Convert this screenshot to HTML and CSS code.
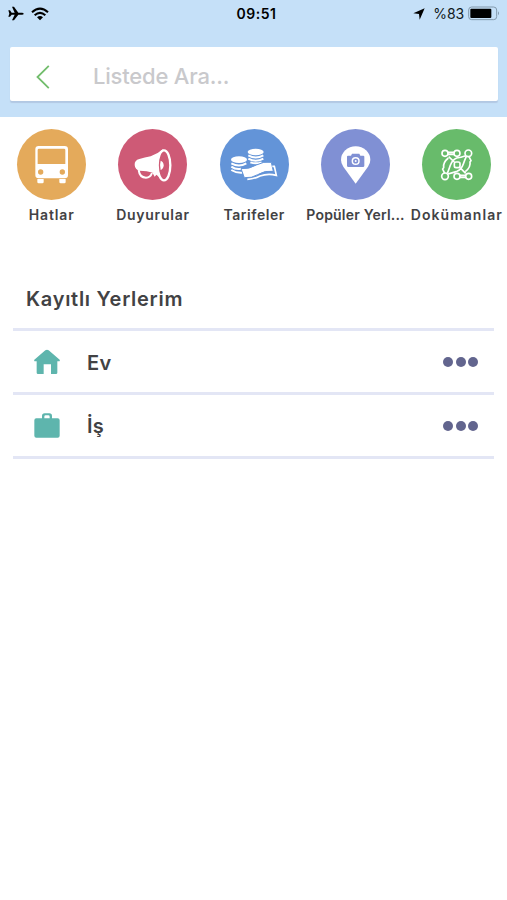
FILE: index.html
```html
<!DOCTYPE html>
<html lang="tr">
<head>
<meta charset="utf-8">
<title>Kayıtlı Yerlerim</title>
<link rel="stylesheet" href="styles.css">
</head>
<body>
<header class="top">
  <div class="status">
    <div class="status-left">
      <svg width="16" height="15" viewBox="0 0 48 45"><path d="M1 13h5l5 7h9L12 2h6l13 18h11q5 0 5 3t-5 3H31L18 43h-6l8-17h-9l-5 6H1l3-9z"/></svg>
      <svg class="wifi" width="18" height="14" viewBox="0 0 54 42"><g fill="none" stroke="#000" stroke-width="6"><path d="M3 16q24-22 48 0"/><path d="M11 25q16-15 32 0"/></g><path d="M18 31q9-8 18 0l-9 9z"/></svg>
    </div>
    <span class="clock">09:51</span>
    <div class="status-right">
      <svg width="12" height="12" viewBox="0 0 36 36"><path d="M35 1L20 35l-2-17L1 16z"/></svg>
      <span class="percent">%83</span>
      <svg class="battery" width="32" height="15" viewBox="0 0 96 45"><rect x="2" y="3" width="84" height="38" rx="9" fill="none" stroke="#8399ac" stroke-width="3"/><rect x="7" y="8" width="63" height="28" rx="3"/><path d="M90 16q6 6 0 12z" fill="#8399ac"/></svg>
    </div>
  </div>
  <div class="search">
    <svg class="back" width="14" height="24" viewBox="0 0 14 24"><path d="M12.8 .8L1.5 12 12.8 23.2" fill="none" stroke="#72bd6c" stroke-width="1.8"/></svg>
    <span class="placeholder">Listede Ara...</span>
  </div>
</header>
<nav class="menu">
  <div class="item">
    <svg class="disc orange" viewBox="51 26 207 213"><path fill="#fff" fill-rule="evenodd" d="M116 77h78q10 0 10 10v77q0 10-10 10h-78q-10 0-10-10V87q0-10 10-10zm1 8q-4 0-4 4v42h83V89q0-4-4-4zm5 62a8 8 0 100 16 8 8 0 000-16zm65 0a8 8 0 100 16 8 8 0 000-16z"/><path fill="#fff" d="M112 176h19v9q0 4-4 4h-11q-4 0-4-4zm66 0h19v9q0 4-4 4h-11q-4 0-4-4z"/></svg>
    <span class="label hatlar">Hatlar</span>
  </div>
  <div class="item">
    <svg class="disc red" viewBox="54 26 207 213"><path fill="#fff" d="M190 86q-18 15-38 22-18 4-34 8-15 4-14 18 1 14 15 17 22 0 40 6 14 6 31 26z"/><path d="M116 149q3 23 22 23 13 0 18-14" fill="none" stroke="#fff" stroke-width="6"/><path d="M156 155l8 14 7-8" fill="#fff"/><ellipse cx="192" cy="135" rx="19" ry="45" fill="#ce5a76" stroke="#fff" stroke-width="7"/><path d="M182 121q9 4 9 14t-9 14q-4-14 0-28z" fill="#fff"/></svg>
    <span class="label duyurular">Duyurular</span>
  </div>
  <div class="item">
    <svg class="disc blue" viewBox="53 26 207 213"><g fill="#fff"><ellipse cx="160" cy="95" rx="24" ry="10"/><ellipse cx="110" cy="118" rx="24" ry="10"/></g><g fill="none" stroke="#fff" stroke-width="6"><path d="M138 105q22 13 45 0M138 115q22 13 45 0M144 126q16 6 34 0M87 129q23 13 45 0M87 139q14 10 30 6M87 149q14 9 32 8"/></g><path fill="#fff" stroke="#6394d8" stroke-width="3" d="M116 145q24 2 46-11 22-12 45-8l6 27q-25-4-47 10-18 11-40 9z"/><path d="M135 177q20-1 38-10 24-9 49-2l-6-27h-6" fill="none" stroke="#fff" stroke-width="5"/></svg>
    <span class="label tarifeler">Tarifeler</span>
  </div>
  <div class="item">
    <svg class="disc violet" viewBox="56 26 207 213"><path fill="#fff" d="M160 190l-37-51q-7-10-7-20a44 41 0 0188 0q0 10-7 20z"/><path fill="#8090d4" d="M137 106h9l3-6h22l3 6h9q3 0 3 3v27q0 4-4 4h-44q-4 0-4-4v-27q0-3 3-3z"/><circle cx="160" cy="122" r="10" fill="#8090d4" stroke="#fff" stroke-width="4.5"/><circle cx="160" cy="122" r="3" fill="#fff"/></svg>
    <span class="label populer">Popüler Yerl...</span>
  </div>
  <div class="item">
    <svg class="disc green" viewBox="60 26 207 213"><g fill="none" stroke="#fff" stroke-width="5"><circle cx="129" cy="99" r="9"/><circle cx="165" cy="99" r="9"/><circle cx="199" cy="99" r="10"/><circle cx="129" cy="168" r="10"/><circle cx="165" cy="168" r="9"/><circle cx="200" cy="168" r="9"/><rect x="157" y="125" width="17" height="17" rx="5"/><path d="M137 96h20M137 102h20M173 165h19M173 171h19M191 106q-15 5-27 7-13 5-19 22-4 12-9 24M138 161q15-5 27-8 13-5 19-22 4-12 9-23M140 109l17 16M174 142l17 17M139 113q-17 14-14 29l-3 4 6 13M190 154q17-14 14-29l3-4-6-12"/></g></svg>
    <span class="label dokumanlar">Dokümanlar</span>
  </div>
</nav>
<main class="places">
  <h1 class="heading">Kayıtlı Yerlerim</h1>
  <div class="place">
    <svg class="place-icon" width="26" height="26" viewBox="0 0 78 78"><path fill="#5eb5ad" d="M34 4q5-4 10 0l33 28q2 5-3 5h-4v34q0 4-4 4H51V46H29v29H12q-4 0-4-4V37H4q-5 0-3-5z"/></svg>
    <span class="place-name ev">Ev</span>
    <span class="dots"><i></i><i></i><i></i></span>
  </div>
  <div class="place">
    <svg class="place-icon" width="26" height="26" viewBox="0 0 78 78"><path fill="#5eb5ad" fill-rule="evenodd" d="M7 16h17V9q0-8 8-8h14q8 0 8 8v7h17q6 0 6 6v46q0 6-6 6H7q-6 0-6-6V22q0-6 6-6zm24 0h16v-5q0-4-4-4h-8q-4 0-4 4z"/></svg>
    <span class="place-name is">İş</span>
    <span class="dots"><i></i><i></i><i></i></span>
  </div>
</main>
</body>
</html>
```
FILE: styles.css
```css
* { box-sizing: border-box; }
body { margin: 0; width: 507px; height: 900px; overflow: hidden; background: #fff; color: #424244; font-family: Inter, sans-serif; }
svg { display: block; flex: none; }
.top { height: 117px; background: #c5e0f8; }
.status { display: grid; grid-template-columns: 1fr auto 1fr; align-items: center; height: 27px; padding: 0 7px 0 8px; color: #101820; }
.status-left, .status-right { display: flex; align-items: center; }
.status-right { justify-content: flex-end; }
.wifi { margin-left: 7px; }
.clock { margin-left: 5px; color: #000; font-size: 14px; font-weight: 600; letter-spacing: .5px; }
.percent { margin: 0 4px 0 9px; font-size: 14px; letter-spacing: -.1px; }
.status-right svg:first-child { margin-right: -1px; }
.search { display: flex; align-items: center; height: 54px; margin: 20px 9px 0 10px; padding-left: 26px; background: #fff; border-radius: 2px; box-shadow: 0 2px 1px #b2c8e3; }
.back { margin-top: 5px; }
.placeholder { margin: 4px 0 0 43px; color: #c9c9cc; font-size: 22px; font-weight: 500; line-height: 30px; letter-spacing: -.2px; }
.menu { display: grid; grid-template-columns: repeat(5, 101.3px); padding-top: 12px; margin-left: 1px; height: 158px; }
.item { display: flex; flex-direction: column; align-items: center; }
.disc { width: 69px; height: 71px; border-radius: 50%; }
.orange { background: #e4aa5b; }
.red { background: #ce5a76; }
.blue { background: #6394d8; }
.violet { background: #8090d4; }
.green { background: #68bb6b; }
.label { margin-top: 5px; font-size: 14px; font-weight: 600; line-height: 20px; white-space: nowrap; }
.hatlar { letter-spacing: .85px; }
.duyurular { letter-spacing: .75px; }
.tarifeler { letter-spacing: .55px; }
.populer { letter-spacing: .2px; }
.dokumanlar { letter-spacing: 1.05px; }
.places { margin: 0 13px; }
.heading { margin: 0; height: 56px; padding: 10px 0 0 13px; font-size: 20px; font-weight: 600; line-height: 28px; letter-spacing: .72px; border-bottom: 3px solid #e3e6f5; }
.place { display: flex; align-items: center; height: 64px; padding: 0 16px 0 21px; border-bottom: 3px solid #e3e6f5; }
.place-name { margin: 2px 0 0 27px; font-size: 20px; font-weight: 600; line-height: 28px; letter-spacing: .3px; }
.is { margin-top: 0; }
.dots { display: flex; gap: 2.5px; margin-left: auto; }
.dots i { width: 10px; height: 10px; border-radius: 50%; background: #62658e; }
```
